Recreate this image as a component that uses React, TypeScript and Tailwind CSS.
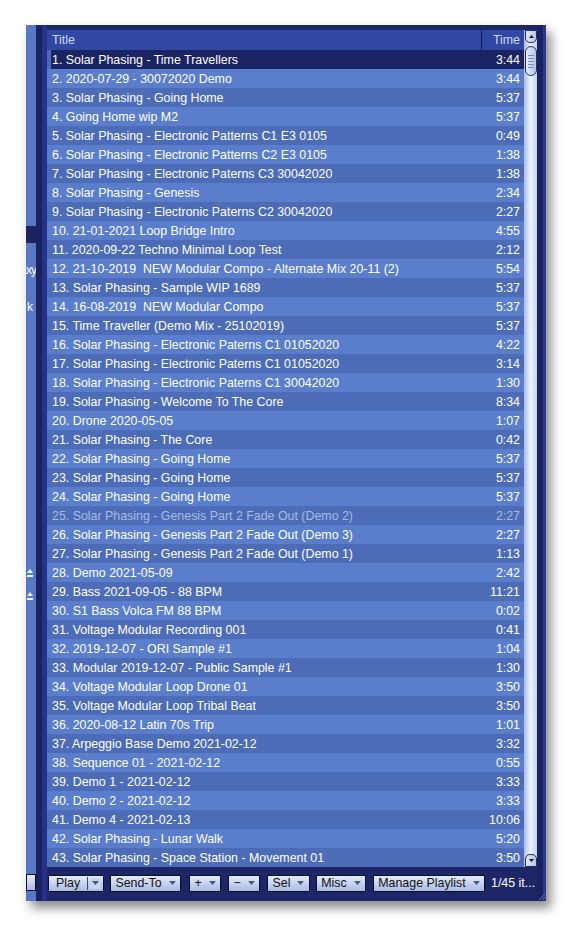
import React from "react";

type Track = { title: string; time: string; dim?: boolean };

const tracks: Track[] = [
  { title: "Solar Phasing - Time Travellers", time: "3:44" },
  { title: "2020-07-29 - 30072020 Demo", time: "3:44" },
  { title: "Solar Phasing - Going Home", time: "5:37" },
  { title: "Going Home wip M2", time: "5:37" },
  { title: "Solar Phasing - Electronic Patterns C1 E3 0105", time: "0:49" },
  { title: "Solar Phasing - Electronic Patterns C2 E3 0105", time: "1:38" },
  { title: "Solar Phasing - Electronic Paterns C3 30042020", time: "1:38" },
  { title: "Solar Phasing - Genesis", time: "2:34" },
  { title: "Solar Phasing - Electronic Paterns C2 30042020", time: "2:27" },
  { title: "21-01-2021 Loop Bridge Intro", time: "4:55" },
  { title: "2020-09-22 Techno Minimal Loop Test", time: "2:12" },
  { title: "21-10-2019  NEW Modular Compo - Alternate Mix 20-11 (2)", time: "5:54" },
  { title: "Solar Phasing - Sample WIP 1689", time: "5:37" },
  { title: "16-08-2019  NEW Modular Compo", time: "5:37" },
  { title: "Time Traveller (Demo Mix - 25102019)", time: "5:37" },
  { title: "Solar Phasing - Electronic Paterns C1 01052020", time: "4:22" },
  { title: "Solar Phasing - Electronic Paterns C1 01052020", time: "3:14" },
  { title: "Solar Phasing - Electronic Paterns C1 30042020", time: "1:30" },
  { title: "Solar Phasing - Welcome To The Core", time: "8:34" },
  { title: "Drone 2020-05-05", time: "1:07" },
  { title: "Solar Phasing - The Core", time: "0:42" },
  { title: "Solar Phasing - Going Home", time: "5:37" },
  { title: "Solar Phasing - Going Home", time: "5:37" },
  { title: "Solar Phasing - Going Home", time: "5:37" },
  { title: "Solar Phasing - Genesis Part 2 Fade Out (Demo 2)", time: "2:27", dim: true },
  { title: "Solar Phasing - Genesis Part 2 Fade Out (Demo 3)", time: "2:27" },
  { title: "Solar Phasing - Genesis Part 2 Fade Out (Demo 1)", time: "1:13" },
  { title: "Demo 2021-05-09", time: "2:42" },
  { title: "Bass 2021-09-05 - 88 BPM", time: "11:21" },
  { title: "S1 Bass Volca FM 88 BPM", time: "0:02" },
  { title: "Voltage Modular Recording 001", time: "0:41" },
  { title: "2019-12-07 - ORI Sample #1", time: "1:04" },
  { title: "Modular 2019-12-07 - Public Sample #1", time: "1:30" },
  { title: "Voltage Modular Loop Drone 01", time: "3:50" },
  { title: "Voltage Modular Loop Tribal Beat", time: "3:50" },
  { title: "2020-08-12 Latin 70s Trip", time: "1:01" },
  { title: "Arpeggio Base Demo 2021-02-12", time: "3:32" },
  { title: "Sequence 01 - 2021-02-12", time: "0:55" },
  { title: "Demo 1 - 2021-02-12", time: "3:33" },
  { title: "Demo 2 - 2021-02-12", time: "3:33" },
  { title: "Demo 4 - 2021-02-13", time: "10:06" },
  { title: "Solar Phasing - Lunar Walk", time: "5:20" },
  { title: "Solar Phasing - Space Station - Movement 01", time: "3:50" },
];

const Arrow = () => (
  <svg width="7" height="4" viewBox="0 0 7 4" className="shrink-0">
    <path d="M0 0h7L3.5 4z" fill="#4b5a84" />
  </svg>
);

const ToolButton = ({ label, w }: { label: string; w: string }) => (
  <div
    className={`flex h-[17px] items-center justify-center gap-[7px] border border-[#0b0f2a] bg-gradient-to-b from-[#e4ebfc] to-[#a9bbe4] text-[12.4px] leading-none text-[#111] ${w}`}
  >
    <span>{label}</span>
    <Arrow />
  </div>
);

const ScrollArrow = ({ up }: { up?: boolean }) => (
  <div
    className={`flex h-[13px] w-[12px] items-center justify-center border border-[#26305c] bg-gradient-to-r from-[#dfe7fb] to-[#b6c6ec] ${
      up ? "rounded-b-[5px]" : "rounded-t-[5px]"
    }`}
  >
    <svg width="5" height="3" viewBox="0 0 5 3">
      <path d={up ? "M0 3h5L2.5 0z" : "M0 0h5L2.5 3z"} fill="#111" />
    </svg>
  </div>
);

export default function App() {
  return (
    <div
      className="h-[927px] w-[572px] overflow-hidden bg-white pl-[26px] pt-[25px]"
      style={{ fontFamily: '"Liberation Sans", Arial, sans-serif' }}
    >
      <div className="relative flex h-[876px] w-[520px] bg-[#1d2768] shadow-[5px_7px_10px_rgba(0,0,0,0.45)]">
        {/* clipped edge of the side pane */}
        <div className="flex w-[10px] flex-col overflow-hidden bg-[#5877c4] pt-[201px] text-[12px] text-white">
          <div className="h-[17px] bg-[#1b2360]" />
          <div className="mt-[20px] flex justify-end whitespace-nowrap leading-[14px] tracking-[-1px]">axy</div>
          <div className="mt-[23px] flex whitespace-nowrap pl-[1px] leading-[14px]">k</div>
          <div className="ml-[1px] mt-[255px] flex flex-col gap-[15px]">
            {[0, 1].map((i) => (
              <svg key={i} width="6" height="8" viewBox="0 0 6 8">
                <path d="M0 4L3 0L6 4z" fill="#f2f5ff" />
                <rect x="0" y="6" width="6" height="2" fill="#f2f5ff" />
              </svg>
            ))}
          </div>
          <div className="mt-auto mb-[10px] h-[17px] border border-[#0b0f2a] bg-gradient-to-b from-[#e4ebfc] to-[#a9bbe4]" />
        </div>

        <div className="w-[6px] bg-[#1a2360]" />
        <div className="w-[5px] bg-[#25328a]" />

        <div className="flex flex-1 flex-col pt-[5px]">
          <div className="flex">
            <div className="flex w-[477px] flex-col">
              {/* column header */}
              <div className="flex h-[20px] bg-[#3148a3] text-[12.4px] text-[#cfd8f2]">
                <div className="flex flex-1 items-center border-r border-[#111a4a] pl-[5px]">Title</div>
                <div className="flex w-[42px] items-center justify-end pr-[4px]">Time</div>
              </div>
              {/* track rows */}
              {tracks.map((t, i) => {
                const selected = i === 0;
                const bg = selected
                  ? "bg-[#1b2463] border-l-4 border-[#4b68b6]"
                  : i % 2 === 1
                    ? "bg-[#5a7ecb]"
                    : "bg-[#4d6cb8]";
                return (
                  <div
                    key={i}
                    className={`flex h-[19px] items-center whitespace-pre pt-px text-[12.4px] ${bg} ${
                      t.dim ? "text-[#a8badf]" : "text-white"
                    }`}
                  >
                    <span className={`flex-1 ${selected ? "pl-[1px]" : "pl-[5px]"}`}>
                      {i + 1}. {t.title}
                    </span>
                    <span className="pr-[4px]">{t.time}</span>
                  </div>
                );
              })}
            </div>

            {/* scrollbar */}
            <div className="flex w-[13px] flex-col bg-gradient-to-r from-[#aabde9] via-[#eef2ff] to-[#c2d0f2] pl-[1px]">
              <ScrollArrow up />
              <div className="mt-[3px] flex h-[30px] w-[12px] flex-col items-center justify-center gap-[2px] rounded-[6px] border border-[#26305c] bg-gradient-to-r from-[#e6ecfd] to-[#b4c5ec]">
                {[0, 1, 2, 3, 4].map((k) => (
                  <div key={k} className="h-px w-[6px] bg-[#7a8ab8]" />
                ))}
              </div>
              <div className="flex-1" />
              <ScrollArrow />
            </div>
          </div>

          {/* bottom toolbar */}
          <div className="mt-[7px] flex items-center text-[12.4px]">
            <div className="ml-[1px] flex h-[17px] w-[56px] items-center border border-[#0b0f2a] bg-gradient-to-b from-[#e4ebfc] to-[#a9bbe4] text-[#111]">
              <span className="flex-1 pl-[7px] leading-none">Play</span>
              <div className="h-[13px] w-px bg-[#3d4668]" />
              <div className="mx-[2px] flex h-[11px] w-[11px] items-center justify-center bg-[#c9d4ef]">
                <Arrow />
              </div>
            </div>
            <div className="ml-[6px]">
              <ToolButton label="Send-To" w="w-[71px]" />
            </div>
            <div className="ml-[8px]">
              <ToolButton label="+" w="w-[32px]" />
            </div>
            <div className="ml-[7px]">
              <ToolButton label="−" w="w-[32px]" />
            </div>
            <div className="ml-[7px]">
              <ToolButton label="Sel" w="w-[43px]" />
            </div>
            <div className="ml-[6px]">
              <ToolButton label="Misc" w="w-[50px]" />
            </div>
            <div className="ml-[7px]">
              <ToolButton label="Manage Playlist" w="w-[112px]" />
            </div>
            <span className="ml-[6px] whitespace-nowrap text-white">1/45 it...</span>
          </div>
        </div>

        <div className="w-[6px] bg-[#1a2360]" />
        <div className="w-[3px] bg-[#2a3990]" />

        {/* resize grip */}
        <svg className="absolute bottom-0 right-0" width="9" height="9" viewBox="0 0 9 9">
          <path d="M8 2L2 8M8 5L5 8" stroke="#5f70b0" strokeWidth="1" />
        </svg>
      </div>
    </div>
  );
}
